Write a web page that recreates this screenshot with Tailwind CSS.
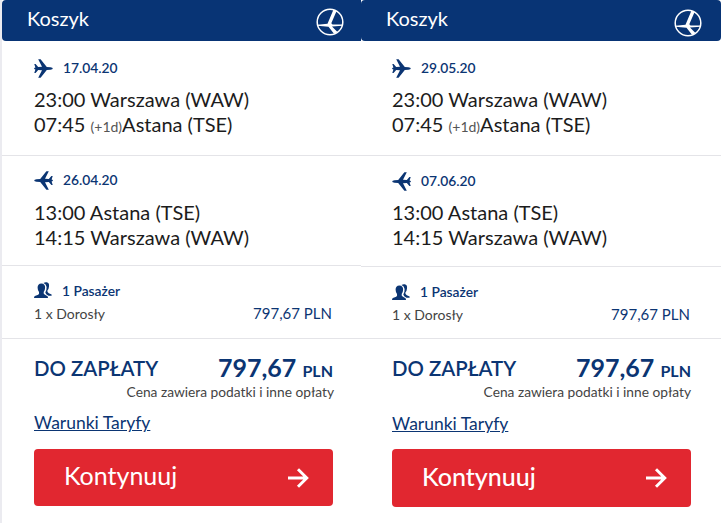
<!DOCTYPE html>
<html lang="pl">
<head>
  <meta charset="UTF-8">
  <meta name="viewport" content="width=device-width, initial-scale=1.0">
  <title>Koszyk</title>
  <script src="https://cdn.jsdelivr.net/npm/@tailwindcss/browser@4"></script>
</head>
<body class="bg-white h-[523px] overflow-hidden font-['Lato',sans-serif] text-[#1c1c1c]">
  <!-- Shared icons -->
  <svg class="hidden">
    <symbol id="logo" viewBox="0 0 28 28">
      <circle cx="14" cy="14" r="12.8" fill="none" stroke="currentColor" stroke-width="1.5"/>
      <path d="M17.4 1.8 L20.6 3 L15.3 15.2 L16.5 16.6 L26.5 16.6 V17.7 L16 18.5 L21.5 24 L18.2 26 L12.5 18.8 L1.5 17.8 V16.8 L11.5 15.8 Z" fill="currentColor"/>
    </symbol>
    <symbol id="plane" viewBox="0 0 19 19">
      <path d="M.3 5 H1.6 L4.2 8 L8 7.8 L4.2 .3 H6.6 L12.8 8 L16.5 8.3 Q18.8 8.8 18.8 9.5 Q18.8 10.2 16.5 10.7 L12.8 11 L6.6 18.7 H4.2 L8 11.2 L4.2 11 L1.6 14 H.3 L1.4 10.4 L.2 9.9 V9.1 L1.4 8.6 Z" fill="currentColor"/>
    </symbol>
    <symbol id="people" viewBox="0 0 18 17">
      <path d="M9.5 1 Q11 0 12.7 .3 Q15.5 .9 15 4.5 Q14.8 7.2 13.4 8.5 Q13 10.4 14.8 11.2 L17.6 12.4 V13.7 H14.5 Q11.6 12.6 11.3 10.5 Q12.8 8 12.6 5 Q12.2 2 9.5 1 Z" fill="currentColor"/>
      <path d="M7.4 1.4 Q11.3 1.6 11.1 5.7 Q11 8.4 9.7 9.9 Q9.2 12 11 12.8 L13.5 14.2 Q14 14.8 14 16 H0 Q0 14.6 .9 14 L4.2 12.7 Q5.5 12 5 9.9 Q3.7 8.4 3.6 5.7 Q3.5 1.6 7.4 1.4 Z" fill="currentColor"/>
    </symbol>
    <symbol id="arrow" viewBox="0 0 21 20">
      <path d="M0 10 H18.5 M10 1.2 L18.8 10 L10 18.8" fill="none" stroke="currentColor" stroke-width="2.9"/>
    </symbol>
  </svg>

  <main class="flex h-full">
    <!-- First basket -->
    <section class="w-[361px] h-full border-l-2 border-[#ebebf0]">
      <header class="flex justify-between h-[41px] pl-[25px] pr-[17px] bg-[#083475] text-white rounded-l-[4px]">
        <h2 class="text-[20px] leading-[37px]">Koszyk</h2>
        <svg class="size-7 mt-2"><use href="#logo"/></svg>
      </header>

      <div class="h-[115px] pl-8 pt-[18px] border-b border-[#e4e4e8]">
        <div class="flex items-center h-[18px] mb-[10px] text-[#0b3573]">
          <svg class="size-[19px]"><use href="#plane"/></svg>
          <span class="ml-[10px] text-[13.8px] font-semibold">17.04.20</span>
        </div>
        <p class="text-[20px] leading-[25px]">23:00 Warszawa (WAW)</p>
        <p class="text-[20px] leading-[25px]">07:45 <span class="text-[14px] text-[#555]">(+1d)</span>Astana (TSE)</p>
      </div>

      <div class="h-[110px] pl-8 pt-[15px] border-b border-[#e4e4e8]">
        <div class="flex items-center h-[18px] mb-[11px] text-[#0b3573]">
          <svg class="size-[19px] -scale-x-100"><use href="#plane"/></svg>
          <span class="ml-[10px] text-[13.8px] font-semibold">26.04.20</span>
        </div>
        <p class="text-[20px] leading-[25px]">13:00 Astana (TSE)</p>
        <p class="text-[20px] leading-[25px]">14:15 Warszawa (WAW)</p>
      </div>

      <div class="h-[73px] pl-8 pr-[29px] pt-4 border-b border-[#e4e4e8]">
        <div class="flex items-center h-[18px] text-[#0b3573]">
          <svg class="w-[18px] h-[17px] mb-[2px]"><use href="#people"/></svg>
          <span class="ml-[10px] text-[13.8px] font-semibold">1 Pasażer</span>
        </div>
        <div class="flex justify-between items-center h-[26px]">
          <span class="text-[14px] text-[#444]">1 x Dorosły</span>
          <span class="text-[15px] text-[#0b3573]">797,67 PLN</span>
        </div>
      </div>

      <div class="pl-8 pr-[28px] pt-[13px]">
        <div class="flex justify-between h-[31px] text-[#0b3573] font-semibold">
          <span class="text-[20.4px] leading-[33px]">DO ZAPŁATY</span>
          <span class="text-[25px] leading-[31px] font-bold">797,67 <span class="text-[16px]">PLN</span></span>
        </div>
        <p class="-mr-px text-right text-[13.75px] leading-[18px] text-[#444]">Cena zawiera podatki i inne opłaty</p>
        <a href="#" class="block mt-[9px] text-[17.5px] leading-[25px] text-[#0b3573] underline">Warunki Taryfy</a>
        <button class="flex justify-between items-center w-[299px] h-[57px] mt-[14px] pl-[30px] pr-[24px] bg-[#e12730] text-white rounded-[4px]">
          <span class="text-[25px] leading-[30px] pb-[5px]">Kontynuuj</span>
          <svg class="w-[21px] h-5"><use href="#arrow"/></svg>
        </button>
      </div>
    </section>

    <!-- Second basket -->
    <section class="w-[360px] h-full">
      <header class="flex justify-between h-[41px] pl-[25px] pr-[19px] bg-[#083475] text-white rounded-[4px]">
        <h2 class="text-[20px] leading-[37px]">Koszyk</h2>
        <svg class="size-7 mt-[9px]"><use href="#logo"/></svg>
      </header>

      <div class="h-[115px] pl-[31px] pt-[18px] border-b border-[#e4e4e8]">
        <div class="flex items-center h-[18px] mb-[10px] text-[#0b3573]">
          <svg class="size-[19px]"><use href="#plane"/></svg>
          <span class="ml-[10px] text-[13.8px] font-semibold">29.05.20</span>
        </div>
        <p class="text-[20px] leading-[25px]">23:00 Warszawa (WAW)</p>
        <p class="text-[20px] leading-[25px]">07:45 <span class="text-[14px] text-[#555]">(+1d)</span>Astana (TSE)</p>
      </div>

      <div class="h-[111px] pl-[31px] pt-4 border-b border-[#e4e4e8]">
        <div class="flex items-center h-[18px] mb-[10px] text-[#0b3573]">
          <svg class="size-[19px] -scale-x-100"><use href="#plane"/></svg>
          <span class="ml-[10px] text-[13.8px] font-semibold">07.06.20</span>
        </div>
        <p class="text-[20px] leading-[25px]">13:00 Astana (TSE)</p>
        <p class="text-[20px] leading-[25px]">14:15 Warszawa (WAW)</p>
      </div>

      <div class="h-[72px] pl-[31px] pr-[31px] pt-4 border-b border-[#e4e4e8]">
        <div class="flex items-center h-[18px] text-[#0b3573]">
          <svg class="w-[18px] h-[17px]"><use href="#people"/></svg>
          <span class="ml-[10px] text-[13.8px] font-semibold">1 Pasażer</span>
        </div>
        <div class="flex justify-between items-center h-[26px]">
          <span class="text-[14px] text-[#444]">1 x Dorosły</span>
          <span class="text-[15px] text-[#0b3573]">797,67 PLN</span>
        </div>
      </div>

      <div class="pl-[31px] pr-[30px] pt-[13px]">
        <div class="flex justify-between h-[31px] text-[#0b3573] font-semibold">
          <span class="text-[20.4px] leading-[33px]">DO ZAPŁATY</span>
          <span class="text-[25px] leading-[31px] font-bold">797,67 <span class="text-[16px]">PLN</span></span>
        </div>
        <p class="text-right text-[13.75px] leading-[18px] text-[#444]">Cena zawiera podatki i inne opłaty</p>
        <a href="#" class="block mt-[10px] text-[17.5px] leading-[25px] text-[#0b3573] underline">Warunki Taryfy</a>
        <button class="flex justify-between items-center w-[299px] h-[58px] mt-[13px] pl-[30px] pr-[24px] bg-[#e12730] text-white rounded-[4px]">
          <span class="text-[25px] leading-[30px] pb-[4px] font-medium">Kontynuuj</span>
          <svg class="w-[21px] h-5"><use href="#arrow"/></svg>
        </button>
      </div>
    </section>
  </main>
</body>
</html>
